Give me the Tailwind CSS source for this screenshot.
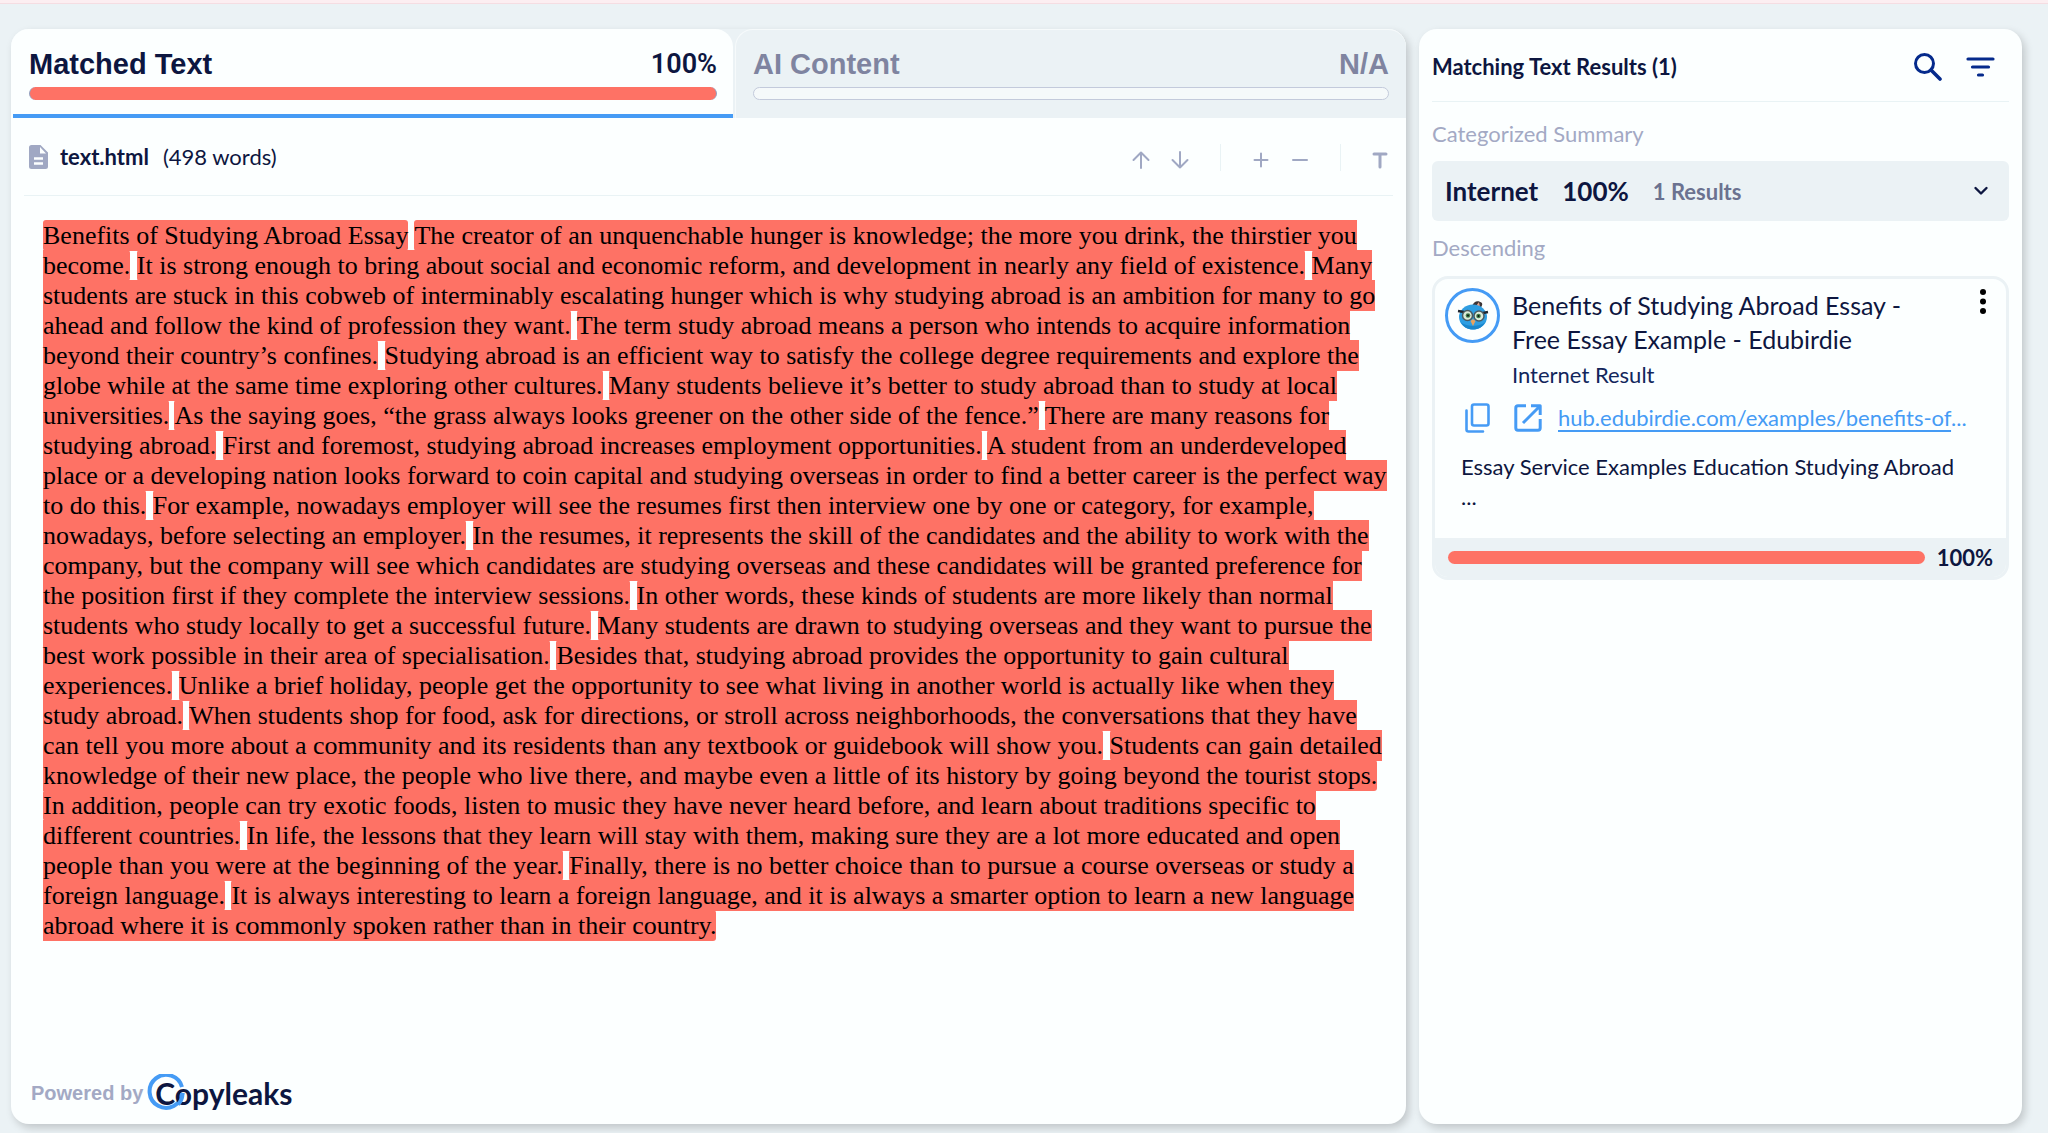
<!DOCTYPE html>
<html lang="en">
<head>
<meta charset="utf-8">
<title>Matched Text report</title>
<script src="https://cdn.jsdelivr.net/npm/@tailwindcss/browser@4"></script>
</head>
<body class="bg-[#ebf2f5] font-[Lato,'Liberation_Sans',sans-serif] text-[#0d1640]">
<div class="flex min-h-screen flex-col">
  <div class="h-1 border-b border-[#f5dde2] bg-[#fceef1]"></div>
  <main class="flex flex-1 gap-[13px] pt-[25px] pr-[26px] pb-[9px] pl-[11px]">

    <section class="flex min-w-0 flex-1 flex-col rounded-[18px] bg-[#fcffff] shadow-[3px_4px_8px_rgba(0,0,0,0.18)]">
      <div role="tablist" class="grid grid-cols-[722fr_671fr] gap-0.5 rounded-t-[18px] bg-[#ebf2f5] font-['Liberation_Sans',Arial,sans-serif]">
        <button role="tab" aria-selected="true" class="flex h-[89px] flex-col rounded-t-[18px] bg-[#fcffff] pl-0.5 text-left">
          <span class="flex w-full flex-1 flex-col px-4 pt-[17px]">
            <span class="flex items-center justify-between leading-9 font-bold">
              <span class="text-[29px]">Matched Text</span>
              <span class="font-[Roboto,sans-serif] text-[27px] font-semibold">100%</span>
            </span>
            <span class="mt-[5px] block h-[13px] rounded-full border-x border-[#8ea3c4] bg-[#fe7265]"></span>
          </span>
          <span class="block h-1 w-full bg-[#459bf5]"></span>
        </button>
        <button role="tab" aria-selected="false" class="flex h-[89px] flex-col rounded-t-[18px] border-t border-l border-[#f6fafb] px-[17px] pt-4 text-left text-[#7f84a0]">
          <span class="flex w-full items-center justify-between text-[29px] leading-9 font-bold">
            <span>AI Content</span>
            <span>N/A</span>
          </span>
          <span class="mt-[5px] block h-[13px] w-full rounded-full border border-[#c3cadb] bg-[#f5f9fa]"></span>
        </button>
      </div>

      <div class="mx-[13px] flex h-[78px] items-center border-b border-[#e9f3f5] pr-[5px] pl-[5px]">
        <svg class="h-6 w-[19px] shrink-0" viewBox="0 0 19 24" fill="#a0a8c3"><path fill-rule="evenodd" d="M2.500 0H11.500L19 7.500V21.500A2.500 2.500 0 0 1 16.500 24H2.500A2.500 2.500 0 0 1 0 21.500V2.500A2.500 2.500 0 0 1 2.500 0ZM11 2V8.500H17ZM5 12.300V14.700H14V12.300ZM5 17.300V19.700H14V17.300Z"/></svg>
        <h1 class="ml-3 text-[22px] leading-7 font-bold">text.html</h1>
        <span class="ml-3.5 text-[22px] leading-7">(498 words)</span>
        <div class="ml-auto flex items-center pt-0.5 text-[#a0a8c3]">
          <button aria-label="Previous match" class="mr-[21px] pt-1"><svg class="h-[18px] w-[18px]" viewBox="0 0 18 18" fill="none" stroke="currentColor" stroke-width="2" stroke-linecap="round" stroke-linejoin="round"><path d="M9 17V1.500M1.500 9L9 1.500L16.500 9"/></svg></button>
          <button aria-label="Next match" class="pt-1"><svg class="h-[18px] w-[18px]" viewBox="0 0 18 18" fill="none" stroke="currentColor" stroke-width="2" stroke-linecap="round" stroke-linejoin="round"><path d="M9 1V16.500M1.500 9L9 16.500L16.500 9"/></svg></button>
          <span class="mx-[31px] h-[27px] w-px bg-[#e9f3f5]"></span>
          <button aria-label="Zoom in" class="mr-[21px] pt-1"><svg class="h-[18px] w-[18px]" viewBox="0 0 18 18" fill="none" stroke="currentColor" stroke-width="2" stroke-linecap="round"><path d="M9 2.500V15.500M2.500 9H15.500"/></svg></button>
          <button aria-label="Zoom out" class="pt-1"><svg class="h-[18px] w-[18px]" viewBox="0 0 18 18" fill="none" stroke="currentColor" stroke-width="2" stroke-linecap="round"><path d="M2 9H16"/></svg></button>
          <span class="mx-[31px] h-[27px] w-px bg-[#e9f3f5]"></span>
          <button aria-label="Text mode" class="pt-1"><svg class="h-[18px] w-4" viewBox="0 0 16 18" fill="none" stroke="currentColor" stroke-width="3" stroke-linecap="round"><path d="M2 3H14M8 3V16"/></svg></button>
        </div>
      </div>

      <article class="flex-1 pt-[25px] pl-8 font-['Liberation_Serif','Times_New_Roman',serif] text-[26px] leading-[30px] whitespace-nowrap text-black [&_mark]:rounded-[3px] [&_mark]:bg-[#fe7265] [&_mark]:py-px">
        <p><mark>Benefits of Studying Abroad Essay</mark> <mark>The creator of an unquenchable hunger is knowledge; the more you drink, the thirstier you<br>
become.</mark> <mark>It is strong enough to bring about social and economic reform, and development in nearly any field of existence.</mark> <mark>Many<br>
students are stuck in this cobweb of interminably escalating hunger which is why studying abroad is an ambition for many to go<br>
ahead and follow the kind of profession they want.</mark> <mark>The term study abroad means a person who intends to acquire information<br>
beyond their country’s confines.</mark> <mark>Studying abroad is an efficient way to satisfy the college degree requirements and explore the<br>
globe while at the same time exploring other cultures.</mark> <mark>Many students believe it’s better to study abroad than to study at local<br>
universities.</mark> <mark>As the saying goes, “the grass always looks greener on the other side of the fence.”</mark> <mark>There are many reasons for<br>
studying abroad.</mark> <mark>First and foremost, studying abroad increases employment opportunities.</mark> <mark>A student from an underdeveloped<br>
place or a developing nation looks forward to coin capital and studying overseas in order to find a better career is the perfect way<br>
to do this.</mark> <mark>For example, nowadays employer will see the resumes first then interview one by one or category, for example,<br>
nowadays, before selecting an employer.</mark> <mark>In the resumes, it represents the skill of the candidates and the ability to work with the<br>
company, but the company will see which candidates are studying overseas and these candidates will be granted preference for<br>
the position first if they complete the interview sessions.</mark> <mark>In other words, these kinds of students are more likely than normal<br>
students who study locally to get a successful future.</mark> <mark>Many students are drawn to studying overseas and they want to pursue the<br>
best work possible in their area of specialisation.</mark> <mark>Besides that, studying abroad provides the opportunity to gain cultural<br>
experiences.</mark> <mark>Unlike a brief holiday, people get the opportunity to see what living in another world is actually like when they<br>
study abroad.</mark> <mark>When students shop for food, ask for directions, or stroll across neighborhoods, the conversations that they have<br>
can tell you more about a community and its residents than any textbook or guidebook will show you.</mark> <mark>Students can gain detailed<br>
knowledge of their new place, the people who live there, and maybe even a little of its history by going beyond the tourist stops.</mark><br>
<mark>In addition, people can try exotic foods, listen to music they have never heard before, and learn about traditions specific to<br>
different countries.</mark> <mark>In life, the lessons that they learn will stay with them, making sure they are a lot more educated and open<br>
people than you were at the beginning of the year.</mark> <mark>Finally, there is no better choice than to pursue a course overseas or study a<br>
foreign language.</mark> <mark>It is always interesting to learn a foreign language, and it is always a smarter option to learn a new language<br>
abroad where it is commonly spoken rather than in their country.</mark></p>
      </article>

      <footer class="flex h-[62px] items-start gap-3 pl-5">
        <span class="font-['Liberation_Sans',Arial,sans-serif] text-[20px] leading-[62px] font-bold text-[#a3a9c4]">Powered by</span>
        <div class="relative h-[62px]">
          <svg class="absolute top-3 -left-2 h-[38px] w-[38px]" viewBox="0 0 38 38" fill="none" stroke="#459bf5" stroke-width="4"><path d="M35 13A16.500 16.500 0 1 0 35.500 19"/></svg>
          <span class="relative text-[30px] leading-[62px] font-bold">Copyleaks</span>
          <svg class="absolute top-3 -left-2 h-[38px] w-[38px]" viewBox="0 0 38 38" fill="none" stroke="#459bf5" stroke-width="4"><path d="M35.500 19A16.500 16.500 0 0 1 31 30.500"/></svg>
        </div>
      </footer>
    </section>

    <aside class="w-[603px] shrink-0 rounded-[18px] bg-[#fcffff] px-[13px] shadow-[3px_4px_8px_rgba(0,0,0,0.18)]">
      <header class="flex h-[73px] items-center border-b border-[#e9f3f5] pt-1 pr-3.5">
        <h2 class="mr-auto text-[22px] leading-8 font-bold">Matching Text Results (1)</h2>
        <button aria-label="Search" class="mr-6 text-[#052a8c]"><svg class="h-7 w-7" viewBox="0 0 28 28" fill="none" stroke="currentColor" stroke-width="3"><circle cx="10.500" cy="10.500" r="9"/><path d="M17 17L26 26" stroke-width="3.600" stroke-linecap="round"/></svg></button>
        <button aria-label="Filter" class="text-[#052a8c]"><svg class="h-7 w-[29px]" viewBox="0 0 29 28" fill="none" stroke="currentColor" stroke-width="3.200" stroke-linecap="round"><path d="M2 6H27M6.500 14H22.500M12.500 22H16.500"/></svg></button>
      </header>

      <h3 class="mt-[18px] text-[22px] leading-7 text-[#a3a9c4]">Categorized Summary</h3>
      <button class="mt-[13px] flex h-[60px] w-full items-center rounded-md bg-[#ebf2f5] pr-5 pl-[13px] text-left">
        <span class="text-[26px] font-bold">Internet</span>
        <span class="ml-6 text-[26px] font-bold">100%</span>
        <span class="ml-6 mr-auto text-[22px] font-bold text-[#6b7290]">1 Results</span>
        <svg class="h-4 w-4" viewBox="0 0 16 16" fill="none" stroke="#0d1640" stroke-width="2.400" stroke-linecap="round" stroke-linejoin="round"><path d="M2.500 5L8 10.500L13.500 5"/></svg>
      </button>
      <h3 class="mt-[13px] text-[22px] leading-7 text-[#a3a9c4]">Descending</h3>

      <div class="mt-3.5 overflow-hidden rounded-2xl border-3 border-[#ebf2f5]">
        <div class="flex h-[259px] flex-col pt-[9px]">
          <div class="flex pr-5 pl-2.5">
            <svg class="h-[55px] w-[55px] shrink-0" viewBox="0 0 55 55">
              <circle cx="27.500" cy="27.500" r="26" fill="#fcffff" stroke="#459bf5" stroke-width="3"/>
              <path d="M27 18C29 13 33 12 37 15C38 17 36 19 35 21Z" fill="#3b3436"/>
              <path d="M31 18L34 14L35 19Z" fill="#e8a48c"/>
              <ellipse cx="28" cy="29" rx="14" ry="12.500" fill="#2e9ee2"/>
              <path d="M16 34C19 44 37 44 40 34C36 39 20 39 16 34Z" fill="#1a86cc"/>
              <path d="M13 23L19 24M43 24L38 25" stroke="#20262e" stroke-width="2.500"/>
              <g stroke="#4a5a62" stroke-width="1.500"><circle cx="22.500" cy="27.500" r="5" fill="#dcebd8"/><circle cx="34" cy="28" r="5" fill="#dcebd8"/></g>
              <circle cx="23" cy="27.500" r="2.300" fill="#3f7d4c"/><circle cx="33.500" cy="28" r="2.300" fill="#3f7d4c"/>
              <circle cx="23" cy="27.500" r="1" fill="#111"/><circle cx="33.500" cy="28" r="1" fill="#111"/>
              <path d="M25.500 33L28 31L30.500 33L28 38Z" fill="#e9a25d"/>
            </svg>
            <div class="ml-3 min-w-0 flex-1">
              <h4 class="text-[25px] leading-[34px]">Benefits of Studying Abroad Essay -<br>Free Essay Example - Edubirdie</h4>
              <p class="mt-0.5 text-[22px] leading-[34px] text-[#12265c]">Internet Result</p>
            </div>
            <button aria-label="More options" class="h-7 w-1.5 self-start"><svg class="h-7 w-1.5" viewBox="0 0 6 28"><circle cx="3" cy="4" r="3"/><circle cx="3" cy="13.500" r="3"/><circle cx="3" cy="23" r="3"/></svg></button>
          </div>
          <div class="mt-2 flex items-center pl-[30px] text-[22px] leading-9 text-[#459bf5]">
            <button aria-label="Copy link" class="mr-6"><svg class="h-[30px] w-[25px]" viewBox="0 0 25 30" fill="none" stroke="currentColor" stroke-width="2.600" stroke-linejoin="round" stroke-linecap="round"><rect x="7" y="1.500" width="16.500" height="21" rx="2"/><path d="M1.500 7.500V26.500Q1.500 28.500 3.500 28.500H18"/></svg></button>
            <button aria-label="Open source" class="mr-4"><svg class="h-7 w-7" viewBox="0 0 28 28" fill="none" stroke="currentColor" stroke-width="3"><path d="M12 1.800H4Q1.800 1.800 1.800 4V24Q1.800 26.200 4 26.200H24Q26.200 26.200 26.200 24V15M17 1.800H26.200V11M26 2L9 19" stroke-linejoin="round"/></svg></button>
            <a href="#" class="whitespace-nowrap"><span class="underline decoration-2 underline-offset-4">hub.edubirdie.com/examples/benefits-of</span>...</a>
          </div>
          <p class="mt-4 px-[26px] text-[22px] leading-[30px]">Essay Service Examples Education Studying Abroad<br>...</p>
        </div>
        <div class="flex h-[39px] items-center gap-3 bg-[#ebf2f5] pr-[13px] pl-[13px]">
          <div class="h-[13px] flex-1 rounded-full bg-[#fe7265]"></div>
          <span class="text-[22px] font-bold">100%</span>
        </div>
      </div>
    </aside>
  </main>
</div>
</body>
</html>
